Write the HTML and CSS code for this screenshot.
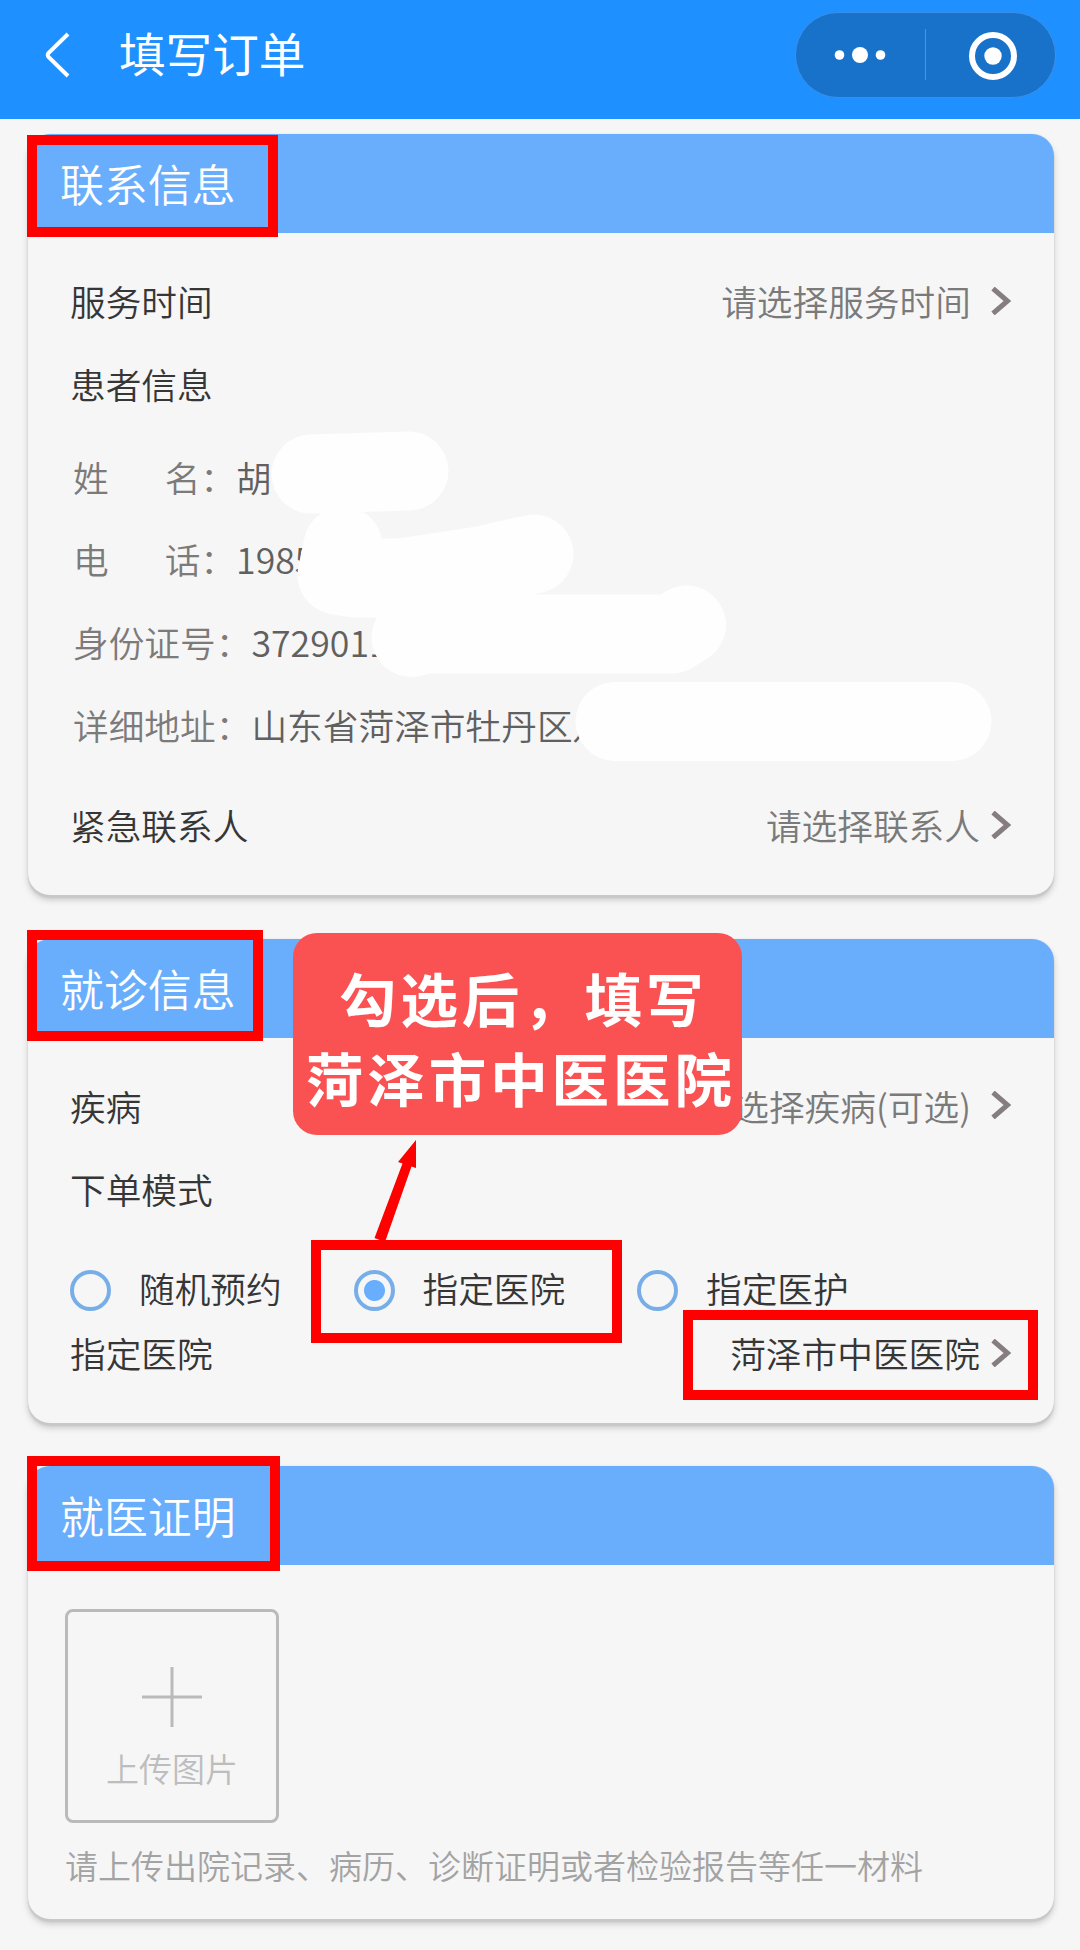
FILE: index.html
```html
<!DOCTYPE html>
<html lang="zh-CN">
<head>
    <meta charset="UTF-8">
    <meta name="viewport" content="width=device-width, initial-scale=1.0">
    <title>填写订单</title>
    <link rel="stylesheet" href="styles.css">
</head>
<body>
    <div class="navbar">
        <svg class="back" width="28" height="50" viewBox="0 0 28 50">
            <path d="M24 4 L4.500 23 Q3 25 4.500 27 L24 46" fill="none" stroke="#fff" stroke-width="4"/>
        </svg>
        <h1>填写订单</h1>
        <div class="capsule">
            <svg width="260" height="84" viewBox="0 0 260 84">
                <g fill="#fff">
                    <circle cx="43.500" cy="42" r="4.800"/>
                    <circle cx="64" cy="42" r="8"/>
                    <circle cx="84.500" cy="42" r="4.800"/>
                    <circle cx="197" cy="43" r="8.700"/>
                </g>
                <path d="M129.500 16 V67" stroke="#4a94e0" stroke-width="1"/>
                <circle cx="197" cy="43" r="21" fill="none" stroke="#fff" stroke-width="6"/>
            </svg>
        </div>
    </div>

    <div class="cards">
        <!-- Contact -->
        <div class="card">
            <h2>联系信息</h2>
            <div class="card-body">
                <div class="row">
                    <span>服务时间</span>
                    <span class="picker">请选择服务时间<svg class="arrow wide" width="20" height="28" viewBox="0 0 20 28"><path d="M2 1.500 L16.500 14 L2 26.500"/></svg></span>
                </div>
                <div class="row">患者信息</div>
                <div class="details">
                    <div class="detail"><span class="short">姓<i></i>名：</span><b>胡</b></div>
                    <div class="detail"><span class="short">电<i></i>话：</span><b>1985</b></div>
                    <div class="detail"><span>身份证号：</span><b>3729011</b></div>
                    <div class="detail"><span>详细地址：</span><b>山东省菏泽市牡丹区八</b></div>
                </div>
                <div class="row">
                    <span>紧急联系人</span>
                    <span class="picker">请选择联系人<svg class="arrow" width="20" height="28" viewBox="0 0 20 28"><path d="M2 1.500 L16.500 14 L2 26.500"/></svg></span>
                </div>
            </div>
        </div>

        <!-- Visit -->
        <div class="card">
            <h2>就诊信息</h2>
            <div class="card-body visit">
                <div class="row">
                    <span>疾病</span>
                    <span class="picker">请选择疾病(可选)<svg class="arrow wide" width="20" height="28" viewBox="0 0 20 28"><path d="M2 1.500 L16.500 14 L2 26.500"/></svg></span>
                </div>
                <div class="row">下单模式</div>
                <div class="radios">
                    <div class="radio"><span class="dot"></span>随机预约</div>
                    <div class="radio"><span class="dot checked"></span>指定医院</div>
                    <div class="radio"><span class="dot"></span>指定医护</div>
                </div>
                <div class="row row-small">
                    <span>指定医院</span>
                    <span class="picker filled">菏泽市中医医院<svg class="arrow" width="20" height="28" viewBox="0 0 20 28"><path d="M2 1.500 L16.500 14 L2 26.500"/></svg></span>
                </div>
            </div>
        </div>

        <!-- Proof -->
        <div class="card">
            <h2>就医证明</h2>
            <div class="card-body proof">
                <div class="upload">
                    <svg width="60" height="60" viewBox="0 0 60 60">
                        <path d="M30 0 V60 M0 30 H60" stroke="#bababa" stroke-width="3"/>
                    </svg>
                    <span>上传图片</span>
                </div>
                <p class="tip">请上传出院记录、病历、诊断证明或者检验报告等任一材料</p>
            </div>
        </div>
    </div>

    <!-- White strokes that hide the private data, and the arrow -->
    <svg class="overlay" width="1080" height="1950" viewBox="0 0 1080 1950">
        <g class="mask">
            <path d="M311 474 L409 471"/>
            <path d="M343 546 L337 575 L355 578 L400 578 L480 566 L534 554"/>
            <path d="M411 637.500 L425 634 H672 L686.500 625"/>
            <path d="M615 721.500 H952"/>
        </g>
        <polygon points="416,1140 398,1162 402.500,1163.500 374.500,1238 385,1242 411.500,1166.500 416,1168" fill="#fe0000"/>
    </svg>

    <div class="mark mark-contact"></div>
    <div class="mark mark-visit"></div>
    <div class="mark mark-radio"></div>
    <div class="mark mark-hospital"></div>
    <div class="mark mark-proof"></div>
    <div class="callout">
        <div>勾选后，填写</div>
        <div>菏泽市中医医院</div>
    </div>
</body>
</html>
```
FILE: styles.css
```css
* {
    box-sizing: border-box;
}
body {
    margin: 0;
    position: relative;
    height: 1950px;
    overflow: hidden;
    background-color: #f6f6f6;
    color: #363636;
    font-family: "Noto Sans CJK SC", sans-serif;
    font-size: 35.7px;
    font-weight: 350;
}
.navbar {
    display: flex;
    align-items: center;
    height: 119px;
    padding: 0 24px 9px 44px;
    background-color: #1e90ff;
}
.navbar h1 {
    flex: 1;
    margin: 0 0 0 47px;
    padding-bottom: 7px;
    color: #fff;
    font-size: 46.6px;
    font-weight: 400;
    line-height: 60px;
}
.capsule {
    width: 261px;
    height: 86px;
    border: 1px solid #3c8fe6;
    border-radius: 43px;
    background-color: #1972ca;
}
.cards {
    display: flex;
    flex-direction: column;
    gap: 43.5px;
    padding: 15px 26px 0 28px;
}
.card {
    border-radius: 22px;
    background-color: #f6f6f6;
    box-shadow: 0 3px 1px #c8c8c8, 0 0 1px #c0c0c0, 0 5px 6px #c8c8c8;
}
.card h2 {
    height: 99px;
    margin: 0;
    padding-left: 32px;
    border-radius: 22px 22px 0 0;
    background-color: #69aefc;
    color: #fff;
    font-size: 43.9px;
    font-weight: 350;
    line-height: 99px;
}
.card-body {
    padding: 28px 43px 27px 42px;
}
.row {
    display: flex;
    justify-content: space-between;
    align-items: center;
    height: 83px;
    padding-bottom: 4px;
}
.row-small {
    height: 66px;
}
.picker {
    display: flex;
    align-items: center;
    color: #7a7a7a;
}
.filled {
    color: #363636;
}
.arrow {
    margin-left: 11px;
    fill: none;
    stroke: #857d7f;
    stroke-width: 5;
}
.wide {
    margin-left: 20px;
}
.details {
    margin: 10px 0 18px 3px;
}
.detail {
    display: flex;
    align-items: center;
    height: 82.6px;
    padding-bottom: 4px;
    color: #7d7a7a;
}
.detail i {
    display: inline-block;
    width: 56px;
}
.detail b {
    color: #606060;
    font-weight: 350;
}
.visit {
    padding-bottom: 35px;
}
.radios {
    display: grid;
    grid-template-columns: repeat(3, 283.5px);
    margin-top: 24px;
}
.radio {
    display: flex;
    align-items: center;
    height: 66px;
    padding-bottom: 3px;
}
.dot {
    width: 41px;
    height: 41px;
    margin: 7px 28px 0 0;
    border: 4px solid #78aee8;
    border-radius: 50%;
}
.checked {
    background: radial-gradient(circle, #69aefc 10px, #f6f6f6 11px);
}
.proof {
    padding: 44px 37px 27px;
}
.upload {
    display: flex;
    flex-direction: column;
    align-items: center;
    width: 214px;
    height: 214px;
    padding-top: 55px;
    border: 3px solid #bababa;
    border-radius: 8px;
    color: #bdbdbd;
    font-size: 33px;
    line-height: 48px;
}
.upload span {
    margin-top: 17px;
}
.tip {
    margin: 18px 0 0;
    padding-bottom: 2px;
    color: #a3a3a3;
    font-size: 33px;
    line-height: 49px;
    white-space: nowrap;
}

/* Annotations drawn over the page */
.overlay {
    position: absolute;
    top: 0;
    left: 0;
}
.mask {
    fill: none;
    stroke: #fefefe;
    stroke-width: 79;
    stroke-linecap: round;
    stroke-linejoin: round;
}
.mark {
    position: absolute;
    border: 10px solid #fe0000;
}
.mark-contact {
    left: 27px;
    top: 135px;
    width: 251px;
    height: 102px;
}
.mark-visit {
    left: 27px;
    top: 930px;
    width: 236px;
    height: 111px;
}
.mark-radio {
    left: 311px;
    top: 1240px;
    width: 311px;
    height: 103px;
}
.mark-hospital {
    left: 683px;
    top: 1310px;
    width: 355px;
    height: 90px;
}
.mark-proof {
    left: 27px;
    top: 1456px;
    width: 253px;
    height: 115px;
}
.callout {
    position: absolute;
    left: 293px;
    top: 933px;
    width: 449px;
    height: 202px;
    padding-top: 24px;
    border-radius: 24px;
    background-color: #fa5252;
    color: #fff;
    font-size: 57.5px;
    font-weight: 700;
    letter-spacing: 3.9px;
    line-height: 80px;
    text-indent: 13px;
    white-space: nowrap;
}
.callout div:first-child {
    text-indent: 46px;
}
```
